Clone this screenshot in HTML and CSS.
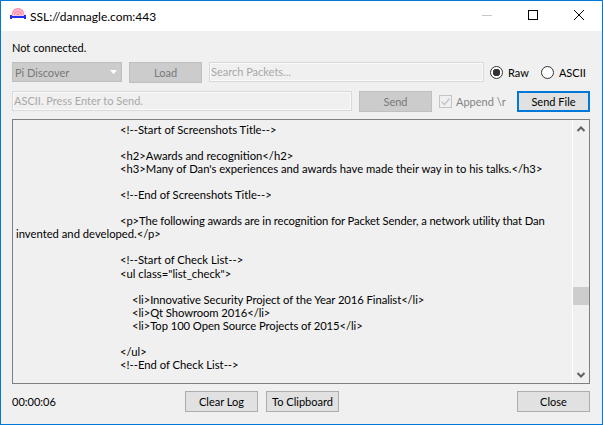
FILE: index.html
```html
<!DOCTYPE html>
<html lang="en">
<head>
<meta charset="utf-8">
<title>SSL://dannagle.com:443</title>
<link rel="stylesheet" href="styles.css">
</head>
<body>
<div class="window">
  <header class="titlebar">
    <svg class="app-icon" width="16" height="12" viewBox="0 0 16 12">
      <path d="M1.500 7.500C1.500 3 4.500 0 8 0S14.500 3 14.500 7.500Z" fill="#ff8fae"/>
      <path d="M3 7C3.500 4 5.500 2 8 2S12.500 4 13 7M5.500 7C6 5.500 7 4.500 8 4.500S10 5.500 10.500 7" fill="none" stroke="#ffd9e4" stroke-width="1"/>
      <path d="M0 7h2v1H14V7h2v4h-2v-1H2v1H0Z" fill="#2230ee"/>
    </svg>
    <span class="title">SSL://dannagle.com:443</span>
    <div class="controls">
      <svg class="ctl" width="46" height="31" viewBox="0 0 46 31"><path d="M18 15.500h10" stroke="#c8c8c8" stroke-width="1"/></svg>
      <svg class="ctl" width="46" height="31" viewBox="0 0 46 31"><rect x="18.500" y="10.500" width="9" height="9" fill="none" stroke="#000"/></svg>
      <svg class="ctl" width="46" height="31" viewBox="0 0 46 31"><path d="M18 10l10 10M28 10L18 20" stroke="#000" stroke-width="1"/></svg>
    </div>
  </header>
  <main class="content">
    <div class="status">Not connected.</div>
    <div class="row row-top">
      <div class="combo"><span>Pi Discover</span><svg width="7" height="4" viewBox="0 0 7 4"><path d="M0 0h7L3.500 4Z" fill="#fff"/></svg></div>
      <button class="btn disabled load" disabled>Load</button>
      <div class="input search">Search Packets...</div>
      <label class="radio"><span class="circle on"></span>Raw</label>
      <label class="radio ascii"><span class="circle"></span>ASCII</label>
    </div>
    <div class="row row-send">
      <div class="input packet">ASCII. Press Enter to Send.</div>
      <button class="btn disabled send" disabled>Send</button>
      <label class="check">
        <svg width="13" height="13" viewBox="0 0 13 13"><rect x=".5" y=".5" width="12" height="12" fill="#f0f0f0" stroke="#c4c4c4"/><path d="M2.500 6.500l3 3 5-6" fill="none" stroke="#c4c4c4" stroke-width="1.200"/></svg>
        Append \r
      </label>
      <button class="btn primary">Send File</button>
    </div>
    <div class="log">
      <div class="log-text">
        <div class="l">&lt;!--Start of Screenshots Title--&gt;</div>
        <div class="l blank"></div>
        <div class="l">&lt;h2&gt;Awards and recognition&lt;/h2&gt;</div>
        <div class="l">&lt;h3&gt;Many of Dan's experiences and awards have made their way in to his talks.&lt;/h3&gt;</div>
        <div class="l blank"></div>
        <div class="l">&lt;!--End of Screenshots Title--&gt;</div>
        <div class="l blank"></div>
        <div class="l tight">&lt;p&gt;The following awards are in recognition for Packet Sender, a network utility that Dan</div>
        <div class="l wrap">invented and developed.&lt;/p&gt;</div>
        <div class="l blank"></div>
        <div class="l">&lt;!--Start of Check List--&gt;</div>
        <div class="l">&lt;ul class="list_check"&gt;</div>
        <div class="l blank"></div>
        <div class="l deep">&lt;li&gt;Innovative Security Project of the Year 2016 Finalist&lt;/li&gt;</div>
        <div class="l deep">&lt;li&gt;Qt Showroom 2016&lt;/li&gt;</div>
        <div class="l deep">&lt;li&gt;Top 100 Open Source Projects of 2015&lt;/li&gt;</div>
        <div class="l blank"></div>
        <div class="l">&lt;/ul&gt;</div>
        <div class="l">&lt;!--End of Check List--&gt;</div>
      </div>
      <div class="scrollbar">
        <svg width="16" height="16" viewBox="0 0 16 16"><path d="M4.500 11l3.500-3.500 3.500 3.500" fill="none" stroke="#606060" stroke-width="2"/></svg>
        <div class="track"><div class="thumb"></div></div>
        <svg width="16" height="16" viewBox="0 0 16 16"><path d="M4.500 6l3.500 3.500 3.500-3.500" fill="none" stroke="#606060" stroke-width="2"/></svg>
      </div>
    </div>
    <div class="row row-bottom">
      <span class="timer">00:00:06</span>
      <button class="btn clear">Clear Log</button>
      <button class="btn">To Clipboard</button>
      <button class="btn close">Close</button>
    </div>
  </main>
</div>
</body>
</html>
```
FILE: styles.css
```css
* { box-sizing: border-box; }
html, body { margin: 0; padding: 0; }
body {
  width: 603px;
  height: 425px;
  overflow: hidden;
  font-family: "Lato", "Open Sans", sans-serif;
  font-size: 11px;
  color: #000;
}
.window {
  width: 603px;
  height: 425px;
  border: 1px solid #0078d7;
  background: #f0f0f0;
  display: flex;
  flex-direction: column;
}
.titlebar {
  height: 30px;
  background: #fff;
  display: flex;
  align-items: center;
  padding-left: 9px;
  flex: none;
}
.app-icon { flex: none; margin: 0 4px 4px 0; }
.title { font-size: 12px; }
.controls { margin-left: auto; display: flex; margin-top: -1px; }
.ctl { display: block; }
.content {
  flex: 1;
  display: flex;
  flex-direction: column;
  padding: 0 12px 0 11px;
  min-height: 0;
}
.status { height: 17px; margin-top: 9px; line-height: 16px; }
.row { display: flex; align-items: center; }
.row-top { margin-top: 5px; height: 21px; }
.row-send { margin-top: 8px; height: 21px; }
.btn {
  width: 73px;
  height: 21px;
  padding: 0;
  border: 1px solid #adadad;
  background: #e1e1e1;
  font: inherit;
  color: #000;
  flex: none;
}
.btn.disabled { background: #cccccc; border-color: #bfbfbf; color: #787878; }
.btn.primary { border: 2px solid #0078d7; margin-left: auto; }
.combo {
  width: 110px;
  height: 20px;
  background: #cccccc;
  border: 1px solid #bfbfbf;
  color: #787878;
  display: flex;
  align-items: center;
  justify-content: space-between;
  padding: 0 4px 0 2px;
  flex: none;
  align-self: flex-start;
}
.load { margin-left: 7px; }
.input {
  height: 20px;
  background: #f0f0f0;
  border: 1px solid #d9d9d9;
  box-shadow: inset 0 0 0 1px #fafafa;
  color: #a8a8a8;
  padding: 0 1px;
  line-height: 17px;
  flex: none;
  align-self: flex-start;
}
.search { width: 275px; margin-left: 7px; }
.packet { width: 340px; }
.send { margin-left: 7px; }
.radio { display: flex; align-items: center; gap: 5px; margin-left: 6px; }
.radio.ascii { margin-left: 12px; }
.circle {
  width: 13px;
  height: 13px;
  border: 1px solid #333;
  border-radius: 50%;
  background: #fff;
  display: block;
  flex: none;
}
.circle.on { background: radial-gradient(circle, #333 0 3.5px, #fff 4px); }
.check { display: flex; align-items: center; gap: 4px; margin-left: 7px; color: #848484; }
.log {
  margin-top: 7px;
  height: 265px;
  border: 1px solid #7f7f7f;
  display: flex;
  flex: none;
}
.log-text {
  flex: 1;
  min-width: 0;
  padding: 3px;
  font-size: 11.250px;
  overflow: hidden;
}
.l { padding-left: 104px; height: 13.050px; line-height: 13px; white-space: nowrap; }
.l.wrap { padding-left: 0; }
.l.tight { letter-spacing: -0.11px; }
.l.deep { padding-left: 116px; letter-spacing: -0.07px; }
.scrollbar {
  width: 17px;
  flex: none;
  border-left: 1px solid #fff;
  display: flex;
  flex-direction: column;
  background: #f0f0f0;
}
.scrollbar svg { flex: none; display: block; }
.track { flex: 1; }
.thumb {
  height: 18px;
  margin-top: 151px;
  background: #cdcdcd;
}
.row-bottom { margin-top: 7px; height: 21px; }
.timer { width: 173px; flex: none; }
.clear { margin-right: 8px; }
.close { margin-left: auto; }
```
